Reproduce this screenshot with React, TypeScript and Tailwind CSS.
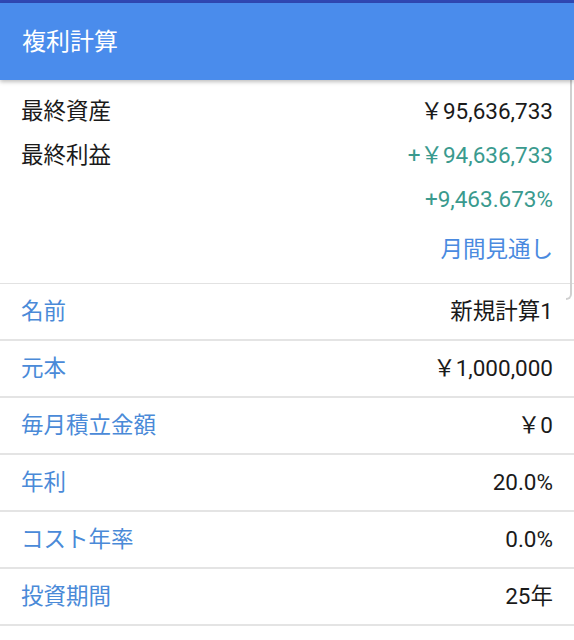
import React from 'react';

const rows = [
  { label: '名前', value: '新規計算1' },
  { label: '元本', value: '￥1,000,000' },
  { label: '毎月積立金額', value: '￥0' },
  { label: '年利', value: '20.0%' },
  { label: 'コスト年率', value: '0.0%' },
  { label: '投資期間', value: '25年' },
];

const App = () => {
  return (
    <div className="relative w-[574px] h-[640px] overflow-hidden bg-white font-['Roboto','Noto_Sans_CJK_JP',sans-serif] text-[22.5px] text-[#1a1a1a]">
      <div className="h-[3px] bg-[#3048b4]" />
      <header className="relative z-10 h-[77px] bg-[#4a8cec] flex items-center px-[22px] shadow-[0_2px_4px_rgba(0,0,0,0.25)]">
        <h1 className="text-white text-[24px]">複利計算</h1>
      </header>

      <section className="pt-[10px] pb-[11px] px-[21px]">
        <div className="h-[44px] flex items-center justify-between">
          <span>最終資産</span>
          <span>￥95,636,733</span>
        </div>
        <div className="h-[44px] flex items-center justify-between">
          <span>最終利益</span>
          <span className="text-[#3a9a8e]">+￥94,636,733</span>
        </div>
        <div className="h-[44px] flex items-center justify-end">
          <span className="text-[#3a9a8e]">+9,463.673%</span>
        </div>
        <div className="mt-[6px] h-[44px] flex items-center justify-end">
          <span className="text-[#4a8ae0]">月間見通し</span>
        </div>
      </section>

      <ul className="border-t border-[#e2e2e2]">
        {rows.map((r) => (
          <li key={r.label} className="h-[57px] border-b-2 border-[#e4e4e4] flex items-center justify-between px-[21px]">
            <span className="text-[#4a8ad8]">{r.label}</span>
            <span>{r.value}</span>
          </li>
        ))}
      </ul>

      <div className="absolute right-[2px] top-[74px] w-[6px] h-[226px] border-r-2 border-b-2 border-[#d0d0d0] rounded-br-[6px]" />
    </div>
  );
};

export default App;
